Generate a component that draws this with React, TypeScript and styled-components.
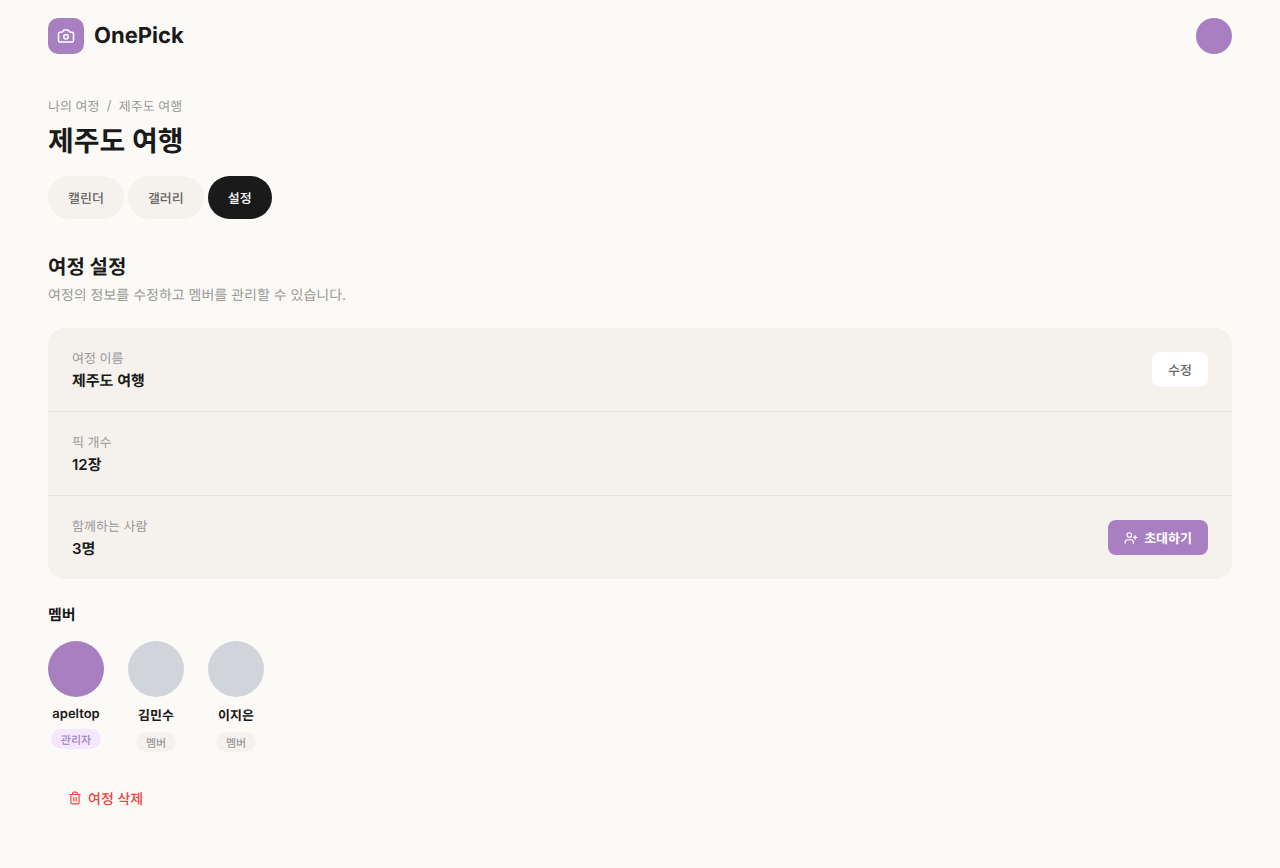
import styled, { createGlobalStyle, css } from 'styled-components';
import { Camera, Trash2, UserPlus } from 'lucide-react';

type Member = {
	id: number;
	name: string;
	isAdmin: boolean;
};

const tabs = ['캘린더', '갤러리', '설정'];

const members: Member[] = [
	{ id: 1, name: 'apeltop', isAdmin: true },
	{ id: 2, name: '김민수', isAdmin: false },
	{ id: 3, name: '이지은', isAdmin: false },
];

const App = () => {
	return (
		<>
			<GlobalStyles />
			<Header>
				<Brand>
					<LogoBox>
						<Camera size={18} />
					</LogoBox>
					<LogoText>OnePick</LogoText>
				</Brand>
				<Avatar $size={36} $active />
			</Header>
			<Main>
				<Breadcrumb>
					<span>나의 여정</span>
					<span>/</span>
					<span>제주도 여행</span>
				</Breadcrumb>
				<Title>제주도 여행</Title>
				<Tabs>
					{tabs.map(tab => (
						<Tab key={tab} $active={tab === '설정'}>
							{tab}
						</Tab>
					))}
				</Tabs>

				<SectionTitle>여정 설정</SectionTitle>
				<Description>여정의 정보를 수정하고 멤버를 관리할 수 있습니다.</Description>

				<Card>
					<Row>
						<div>
							<Label>여정 이름</Label>
							<Value>제주도 여행</Value>
						</div>
						<Button>수정</Button>
					</Row>
					<Row>
						<div>
							<Label>픽 개수</Label>
							<Value>12장</Value>
						</div>
					</Row>
					<Row>
						<div>
							<Label>함께하는 사람</Label>
							<Value>3명</Value>
						</div>
						<Button $primary>
							<UserPlus size={14} />
							초대하기
						</Button>
					</Row>
				</Card>

				<MembersTitle>멤버</MembersTitle>
				<Members>
					{members.map(member => (
						<MemberItem key={member.id}>
							<Avatar $size={56} $active={member.isAdmin} />
							<Name $latin={/^\w+$/.test(member.name)}>{member.name}</Name>
							<Badge $admin={member.isAdmin}>
								{member.isAdmin ? '관리자' : '멤버'}
							</Badge>
						</MemberItem>
					))}
				</Members>

				<DeleteButton>
					<Trash2 size={14} />
					<span>여정 삭제</span>
				</DeleteButton>
			</Main>
		</>
	);
};

export default App;

const GlobalStyles = createGlobalStyle`
	* {
		margin: 0;
		padding: 0;
		box-sizing: border-box;
	}

	body {
		background-color: #fcfaf7;
		color: #1a1a1a;
		font-family: Inter, 'Noto Sans CJK KR', sans-serif;
		text-rendering: geometricPrecision;
	}

	button {
		border: none;
		font-family: inherit;
		text-rendering: inherit;
		cursor: pointer;
	}

	svg {
		flex-shrink: 0;
	}
`;

const Header = styled.header`
	display: flex;
	justify-content: space-between;
	align-items: center;
	height: 72px;
	padding: 0 48px;
`;

const Brand = styled.div`
	display: flex;
	align-items: center;
	gap: 10px;
`;

const LogoBox = styled.div`
	display: flex;
	justify-content: center;
	align-items: center;
	width: 36px;
	height: 36px;
	border-radius: 10px;
	background-color: #a880c2;
	color: #fff;
`;

const LogoText = styled.span`
	font-size: 22px;
	font-weight: 700;
`;

const Avatar = styled.div<{ $size: number; $active?: boolean }>`
	width: ${({ $size }) => $size}px;
	height: ${({ $size }) => $size}px;
	border-radius: 50%;
	background-color: ${({ $active }) => ($active ? '#a880c2' : '#d1d5db')};
`;

const Main = styled.main`
	padding: 24px 48px;
`;

const Breadcrumb = styled.nav`
	display: flex;
	align-items: center;
	gap: 7.3px;
	color: #999;
	font-size: 13px;
`;

const Title = styled.h1`
	margin-top: 6px;
	font-size: 28px;
	line-height: 41px;
	font-weight: 700;
`;

const Tabs = styled.div`
	display: flex;
	gap: 4px;
	margin-top: 14px;
`;

const Tab = styled.button<{ $active: boolean }>`
	padding: 12px 20px;
	border-radius: 24px;
	background-color: ${({ $active }) => ($active ? '#1a1a1a' : '#f5f2ed')};
	color: ${({ $active }) => ($active ? '#fff' : '#666')};
	font-size: 13px;
	font-weight: 500;
`;

const SectionTitle = styled.h2`
	margin-top: 32px;
	font-size: 20px;
	font-weight: 700;
`;

const Description = styled.p`
	margin-top: 5px;
	color: #999;
	font-size: 14px;
`;

const Card = styled.section`
	margin-top: 23px;
	border-radius: 16px;
	background-color: #f5f2ed;
	overflow: hidden;
`;

const Row = styled.div`
	display: flex;
	justify-content: space-between;
	align-items: center;
	padding: 20px 24px;

	&:not(:last-child) {
		border-bottom: 1px solid #e5e2dd;
	}
`;

const Label = styled.p`
	color: #999;
	font-size: 13px;
`;

const Value = styled.p`
	margin-top: 3px;
	font-size: 15px;
	font-weight: 600;
`;

const Button = styled.button<{ $primary?: boolean }>`
	display: flex;
	align-items: center;
	gap: 6px;
	padding: 8px 16px;
	border-radius: 8px;
	background-color: #fff;
	box-shadow: 0 1px 1px rgba(0, 0, 0, 0.03);
	color: #666;
	font-size: 13px;
	font-weight: 500;

	${({ $primary }) =>
		$primary &&
		css`
			background-color: #a880c2;
			box-shadow: none;
			color: #fff;
			font-weight: 600;
		`}
`;

const MembersTitle = styled.h3`
	margin-top: 25px;
	font-size: 15px;
	font-weight: 600;
`;

const Members = styled.div`
	display: flex;
	align-items: flex-start;
	gap: 24px;
	margin-top: 16px;
`;

const MemberItem = styled.div`
	display: flex;
	flex-direction: column;
	align-items: center;
	gap: 8px;
`;

const Name = styled.span<{ $latin: boolean }>`
	margin-bottom: ${({ $latin }) => ($latin ? -1 : 0)}px;
	padding-top: ${({ $latin }) => ($latin ? 1 : 0)}px;
	font-size: 13px;
	font-weight: 600;
`;

const Badge = styled.span<{ $admin: boolean }>`
	padding: 3px 10px 1px;
	border-radius: 10px;
	background-color: ${({ $admin }) => ($admin ? '#f3e8ff' : '#f5f2ed')};
	color: ${({ $admin }) => ($admin ? '#a880c2' : '#999')};
	font-size: 11px;
	font-weight: 500;
`;

const DeleteButton = styled.button`
	display: flex;
	align-items: center;
	gap: 6px;
	margin-top: 24px;
	padding: 11px 20px;
	background: none;
	color: #ef4444;
	font-size: 14px;
	font-weight: 500;

	span {
		padding-top: 2px;
	}
`;
